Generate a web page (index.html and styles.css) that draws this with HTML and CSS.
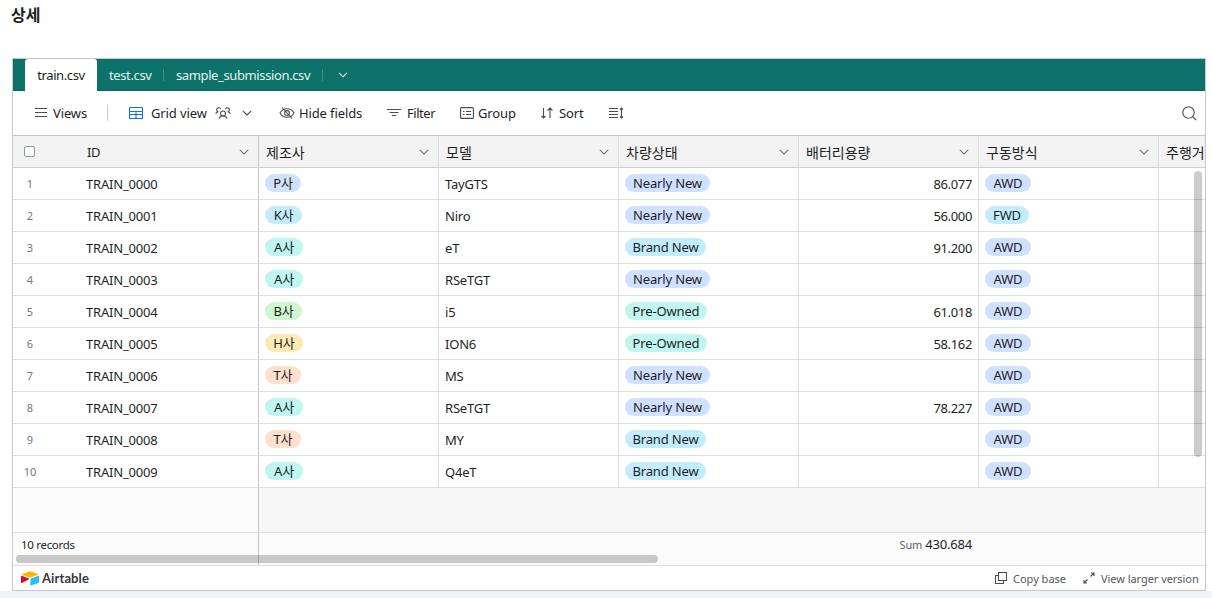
FILE: index.html
```html
<!DOCTYPE html>
<html lang="ko">
<head>
    <meta charset="UTF-8">
    <meta name="viewport" content="width=device-width, initial-scale=1.0">
    <title>상세</title>
    <link rel="stylesheet" href="styles.css">
</head>
<body>
    <h2 class="title">상세</h2>

    <div class="embed">
        <!-- Table tabs -->
        <div class="tabs">
            <div class="tab tab-active">train.csv</div>
            <div class="tab tab-test">test.csv</div>
            <div class="tab tab-sample"><span>sample_submission.csv</span></div>
            <svg class="tab-more" width="10" height="6" viewBox="0 0 10 6"><path d="M1 .8l4 4 4-4"/></svg>
        </div>

        <!-- Toolbar -->
        <div class="toolbar">
            <div class="tool views">
                <svg width="12" height="12" viewBox="0 0 12 12"><path d="M0 1.5h12M0 5.5h12M0 9.5h12"/></svg>
                <span>Views</span>
            </div>
            <div class="divider"></div>
            <div class="tool grid-view">
                <svg class="blue" width="14" height="12" viewBox="0 0 14 12"><rect x=".5" y=".5" width="13" height="11" rx=".8"/><path d="M.5 4.500h13M.5 7.500h13M7 4.500v7"/></svg>
                <span>Grid view</span>
                <svg class="people" width="16" height="14" viewBox="0 0 16 14"><circle cx="8" cy="7.500" r="2.500"/><path d="M4 12.500c.7-1.600 2-2.500 4-2.500s3.300.9 4 2.500M.6 7.600c.7-1.200 1.600-1.900 2.900-1.900M15.400 7.600c-.7-1.200-1.600-1.900-2.900-1.900M2.900 5.600a2 2 0 1 1 2.700-2.400M13.100 5.600a2 2 0 1 0-2.700-2.400"/></svg>
                <svg class="chevron" width="10" height="6" viewBox="0 0 10 6"><path d="M.8.8L5 5 9.200.8"/></svg>
            </div>
            <div class="tool hide-fields">
                <svg width="16" height="14" viewBox="0 0 16 14"><path d="M1 7c1.500-2.800 3.900-4.300 7-4.300s5.500 1.500 7 4.300c-1.500 2.800-3.900 4.300-7 4.300S2.500 9.800 1 7z"/><circle cx="8" cy="7" r="2.400"/><path d="M3 1.500l10 11"/></svg>
                <span>Hide fields</span>
            </div>
            <div class="tool filter">
                <svg width="14" height="10" viewBox="0 0 14 10"><path d="M0 1.500h14M2.500 4.500h9M5 7.500h4"/></svg>
                <span>Filter</span>
            </div>
            <div class="tool group">
                <svg width="14" height="12" viewBox="0 0 14 12"><rect x=".6" y=".6" width="12.800" height="10.800" rx="1"/><path d="M3 4.500h1.500M6 4.500h5M3 7.500h1.500M6 7.500h5"/></svg>
                <span>Group</span>
            </div>
            <div class="tool sort">
                <svg width="12" height="12" viewBox="0 0 12 12"><path d="M2.500 1v10M.5 9l2 2 2-2M9 11V1M6.500 3.500L9 1l2.500 2.500"/></svg>
                <span>Sort</span>
            </div>
            <svg class="row-height" width="15" height="12" viewBox="0 0 15 12"><path d="M0 1.500h9M0 4.500h9M0 7.500h9M0 10.500h9M12.500 1.500v9M11 2.500L12.500 1 14 2.500M11 9.500l1.500 1.500L14 9.500"/></svg>
            <svg class="search" width="15" height="15" viewBox="0 0 15 15"><circle cx="6.500" cy="6.500" r="5.700"/><path d="M10.600 10.600l3.400 3.400"/></svg>
        </div>

        <!-- Grid -->
        <div class="grid" id="grid">
            <div class="row header">
                <div class="cell first"><span class="checkbox"></span><span class="name">ID</span></div>
                <div class="cell">제조사</div>
                <div class="cell">모델</div>
                <div class="cell">차량상태</div>
                <div class="cell">배터리용량</div>
                <div class="cell">구동방식</div>
                <div class="cell last">주행거</div>
            </div>
        </div>
        <div class="empty"><div class="empty-left"></div></div>
        <div class="summary">
            <div class="summary-left">10 records</div>
            <div class="sum"><span class="sum-label">Sum</span> 430.684</div>
        </div>
        <div class="scroll-y"></div>
        <div class="scroll-x"></div>

        <!-- Footer -->
        <div class="footer">
            <svg width="18" height="15" viewBox="0 0 18 15"><path fill="#fcb400" d="M8 .4L1.300 3.100c-.4.200-.4.600 0 .8l6.800 2.300c.6.200 1.200.2 1.800 0l6.800-2.300c.4-.2.400-.6 0-.8L10 .4C9.400.2 8.600.2 8 .4z"/><path fill="#2bbcff" d="M9.400 7.900v6.200c0 .3.300.5.600.4l7.600-2.800c.2-.1.400-.2.400-.4V5.200c0-.3-.3-.5-.6-.4L9.700 7.500c-.2.100-.3.200-.3.400z"/><path fill="#dc043b" d="M8 8.200L1 12c-.4.200-1 0-1-.4V5.300c0-.4.400-.6.800-.5l7 2.700c.4.200.5.500.2.700z"/></svg>
            <span class="brand">Airtable</span>
            <div class="link copy">
                <svg width="12" height="12" viewBox="0 0 12 12"><path d="M3.500.5h8v8h-8zM3.500 3.500h-3v8h8v-3"/></svg>
                <span>Copy base</span>
            </div>
            <div class="link larger">
                <svg width="12" height="12" viewBox="0 0 12 12"><path d="M7.500 4.500L11 1M8 1h3v3M4.500 7.500L1 11M1 8v3h3"/></svg>
                <span>View larger version</span>
            </div>
        </div>
    </div>

    <script>
        // maker, maker color, model, condition, battery, drive
        const rows = [
            ['P사', 'blue', 'TayGTS', 'Nearly New', '86.077', 'AWD'],
            ['K사', 'cyan', 'Niro', 'Nearly New', '56.000', 'FWD'],
            ['A사', 'teal', 'eT', 'Brand New', '91.200', 'AWD'],
            ['A사', 'teal', 'RSeTGT', 'Nearly New', '', 'AWD'],
            ['B사', 'green', 'i5', 'Pre-Owned', '61.018', 'AWD'],
            ['H사', 'yellow', 'ION6', 'Pre-Owned', '58.162', 'AWD'],
            ['T사', 'orange', 'MS', 'Nearly New', '', 'AWD'],
            ['A사', 'teal', 'RSeTGT', 'Nearly New', '78.227', 'AWD'],
            ['T사', 'orange', 'MY', 'Brand New', '', 'AWD'],
            ['A사', 'teal', 'Q4eT', 'Brand New', '', 'AWD']
        ];
        const colors = {
            'Nearly New': 'blue', 'Brand New': 'cyan', 'Pre-Owned': 'teal',
            'AWD': 'blue', 'FWD': 'cyan'
        };
        // Pill widths in px
        const widths = {
            'P사': 36, 'K사': 37, 'A사': 38, 'B사': 37, 'H사': 38, 'T사': 36,
            'Nearly New': 85, 'Brand New': 81, 'Pre-Owned': 82, 'AWD': 46, 'FWD': 44
        };

        function pill(text, color) {
            return `<span class="pill pill-${color}" style="width: ${widths[text]}px">${text}</span>`;
        }

        const grid = document.getElementById('grid');

        grid.querySelectorAll('.header .cell:not(.last)').forEach(cell => {
            cell.insertAdjacentHTML('beforeend', '<svg class="menu" width="10" height="6" viewBox="0 0 10 6"><path d="M.8.8L5 5 9.200.8"/></svg>');
        });

        rows.forEach(([maker, makerColor, model, state, battery, drive], i) => {
            grid.insertAdjacentHTML('beforeend', `
                <div class="row">
                    <div class="cell first"><span class="num">${i + 1}</span><span class="id">TRAIN_000${i}</span></div>
                    <div class="cell">${pill(maker, makerColor)}</div>
                    <div class="cell text">${model}</div>
                    <div class="cell">${pill(state, colors[state])}</div>
                    <div class="cell text number">${battery}</div>
                    <div class="cell">${pill(drive, colors[drive])}</div>
                    <div class="cell last"></div>
                </div>`);
        });
    </script>
</body>
</html>
```
FILE: styles.css
```css
* {
    box-sizing: border-box;
}

body {
    font-family: 'Noto Sans', 'Noto Sans CJK KR', sans-serif;
    font-size: 13px;
    color: #1d1f25;
    margin: 0;
    height: 598px;
    background: linear-gradient(#fff 591px, #f2f3f5 591px);
    overflow: hidden;
}

svg {
    fill: none;
    stroke: #4b4d53;
    stroke-width: 1.1;
    flex: none;
}

.title {
    margin: 0;
    padding: 4px 0 0 11px;
    height: 58px;
    font-size: 16px;
    line-height: 22px;
    font-weight: bold;
}

.embed {
    position: relative;
    margin-left: 12px;
    width: 1194px;
    height: 533px;
    border: 1px solid #c8c8c8;
    background: #fff;
    overflow: hidden;
}

/* Tabs */
.tabs {
    display: flex;
    align-items: center;
    height: 32px;
    padding-left: 12px;
    background: #0d7269;
    border-bottom: 1px solid #0b655c;
    color: #e4f1ef;
    letter-spacing: -0.38px;
}

.tab {
    line-height: 32px;
    white-space: nowrap;
}

.tab-active {
    width: 72px;
    height: 32px;
    margin-bottom: -1px;
    text-align: center;
    background: #fff;
    color: #1d1f25;
    border-radius: 3px 3px 0 0;
}

.tab-test,
.tab-sample {
    display: flex;
    align-items: center;
    justify-content: space-between;
    padding-left: 12px;
}

.tab-test {
    width: 67px;
}

.tab-sample {
    width: 159px;
}

.tab-test::after,
.tab-sample::after {
    content: "";
    width: 1px;
    height: 12px;
    background: #3d8e87;
}

.tab-more {
    margin-left: 15px;
    stroke: #fff;
}

/* Toolbar */
.toolbar {
    display: flex;
    align-items: center;
    height: 45px;
    padding: 0 8px 0 22px;
    border-bottom: 1px solid #c4c4c6;
    letter-spacing: -0.12px;
}

.tool {
    display: flex;
    align-items: center;
    white-space: nowrap;
}

.tool span {
    margin-left: 6px;
}

.views {
    width: 72px;
}

.divider {
    width: 1px;
    height: 16px;
    background: #c8c8c8;
}

.grid-view {
    width: 150px;
    margin-left: 21px;
}

.grid-view span {
    margin-left: 8px;
}

.blue {
    stroke: #166ee1;
}

.people {
    margin-left: 8px;
}

.chevron {
    margin-left: 11px;
}

.hide-fields {
    width: 108px;
}

.hide-fields span,
.group span {
    margin-left: 4px;
}

.filter {
    width: 73px;
}

.filter span {
    letter-spacing: -0.45px;
}

.group {
    width: 81px;
}

.sort {
    width: 68px;
}

.search {
    margin-left: auto;
}

/* Grid */
.row {
    display: grid;
    grid-template-columns: 246px repeat(5, 180px) 46px;
    height: 32px;
}

.cell {
    display: flex;
    align-items: center;
    padding-left: 6px;
    border-right: 1px solid #dddee0;
    border-bottom: 1px solid #dddee0;
    white-space: nowrap;
    overflow: hidden;
}

.cell.first {
    padding-left: 0;
    border-right-color: #c6c6c8;
}

.cell.last {
    border-right: 0;
}

.header .cell {
    padding-left: 7px;
    background: #f3f3f3;
    border-bottom-color: #cfcfd1;
    font-size: 14px;
}

.header .first {
    padding-left: 11px;
    font-size: 13px;
}

.checkbox {
    width: 11px;
    height: 11px;
    border: 1px solid #8f9aa8;
    border-radius: 2px;
    background: #fff;
}

.name {
    margin-left: 52px;
    letter-spacing: -0.4px;
}

.menu {
    margin-left: auto;
    margin-right: 9px;
    stroke: #75777c;
}

.num {
    width: 34px;
    text-align: center;
    font-size: 11px;
    color: #74767b;
}

.id {
    margin-left: 39px;
}

.id,
.text {
    letter-spacing: -0.2px;
}

.number {
    justify-content: flex-end;
    padding-right: 6px;
    letter-spacing: -0.35px;
}

.pill {
    height: 18px;
    line-height: 18px;
    margin-bottom: 1px;
    border-radius: 9px;
    text-align: center;
    letter-spacing: -0.15px;
}

.pill-blue { background: #d0e0ff; }
.pill-cyan { background: #c4ecff; }
.pill-teal { background: #c1f5f0; }
.pill-green { background: #cff5d1; }
.pill-yellow { background: #ffeab6; }
.pill-orange { background: #ffe0cc; }

/* Area under the rows */
.empty {
    height: 45px;
    background: #f6f6f6;
    border-bottom: 1px solid #dddee0;
}

.empty-left {
    width: 246px;
    height: 44px;
    background: #fcfcfc;
    border-right: 1px solid #c6c6c8;
}

.summary {
    display: flex;
    height: 33px;
    line-height: 24px;
    background: #fbfbfb;
    border-bottom: 1px solid #dddee0;
}

.summary-left {
    width: 246px;
    padding-left: 8px;
    font-size: 11.5px;
    letter-spacing: -0.3px;
    border-right: 1px solid #c6c6c8;
}

.sum {
    width: 713px;
    text-align: right;
    line-height: 23px;
    letter-spacing: -0.2px;
}

.sum-label {
    font-size: 11px;
    color: #606268;
}

/* Scrollbars lie over the grid */
.scroll-y,
.scroll-x {
    position: absolute;
    background: rgba(0, 0, 0, 0.2);
    border-radius: 4px;
}

.scroll-y {
    top: 112px;
    right: 3px;
    width: 8px;
    height: 286px;
}

.scroll-x {
    top: 496px;
    left: 3px;
    width: 642px;
    height: 8px;
}

/* Footer */
.footer {
    display: flex;
    align-items: center;
    height: 24px;
    padding: 0 8px;
    font-size: 11px;
    color: #55575d;
}

.footer > svg {
    stroke: none;
}

.brand {
    margin-left: 3px;
    font-family: Lato, sans-serif;
    font-size: 13px;
    font-weight: bold;
    letter-spacing: 0.1px;
    color: #333840;
}

.link {
    display: flex;
    align-items: center;
    white-space: nowrap;
}

.link span {
    margin-left: 6px;
}

.copy {
    margin-left: auto;
    width: 88px;
}

.larger {
    width: 114px;
    letter-spacing: -0.05px;
}
```
